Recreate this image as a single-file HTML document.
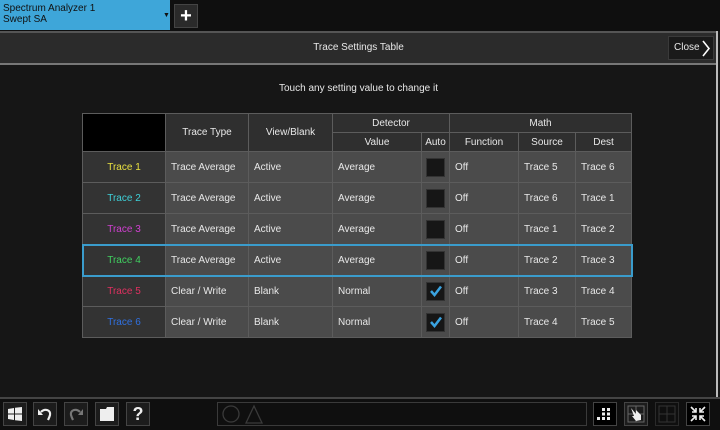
<!DOCTYPE html><html><head><style>
*{margin:0;padding:0;box-sizing:border-box}
body{width:720px;height:430px;background:#161616;font-family:"Liberation Sans",sans-serif;font-size:10px;color:#e8e8e8;position:relative;overflow:hidden}
.abs{position:absolute}
table{position:absolute;left:82px;top:113px;border-collapse:collapse;table-layout:fixed}
td{border:1px solid #5c5c5c;background:#4b4b4b;height:31px;padding-left:5px;white-space:nowrap}
tr.h td{background:#2f2f2f;text-align:center;padding:0;height:19px}
td.l{background:#333;text-align:center;padding:0}
.cb{width:19px;height:19px;background:#161616;border:1px solid #333;margin:0 auto;display:flex;align-items:center;justify-content:center}
td.a{padding:0}
.btn{position:absolute;top:402px;width:24px;height:24px;border:1px solid #444;background:#1c1c1c;display:flex;align-items:center;justify-content:center;color:#eee}
</style></head><body>
<div class="abs" style="left:0;top:0;width:720px;height:31px;background:#0f0f0f"></div>
<div class="abs" style="left:0;top:0;width:170px;height:30px;background:#3ea6d9;color:#111;font-size:10px;line-height:11px;padding:3px 3px">Spectrum Analyzer 1<br>Swept SA<span class="abs" style="left:163px;top:10px;font-size:7px">▼</span></div>
<div class="abs" style="left:174px;top:4px;width:24px;height:24px;background:#2a2a2a;border:1px solid #444;color:#fff;font-size:20px;font-weight:bold;text-align:center;line-height:22px">+</div>
<div class="abs" style="left:0;top:31px;width:717px;height:34px;background:#2b2b2b;border-top:2px solid #555;border-bottom:2px solid #777"></div>
<div class="abs" style="left:0;top:42px;width:717px;text-align:center;font-size:10px">Trace Settings Table</div>
<div class="abs" style="left:668px;top:36px;width:46px;height:24px;background:#1a1a1a;border:1px solid #3a3a3a;font-size:10px;line-height:22px;padding-left:5px">Close<svg class="abs" style="left:33px;top:3px" width="9" height="17"><path d="M1 1 L7 8.5 L1 16" stroke="#fff" stroke-width="1.6" fill="none"/></svg></div>
<div class="abs" style="left:716px;top:31px;width:2px;height:370px;background:#bbb"></div>
<div class="abs" style="left:0;top:83px;width:717px;text-align:center">Touch any setting value to change it</div>
<table>
<colgroup><col style="width:83px"><col style="width:83px"><col style="width:84px"><col style="width:89px"><col style="width:28px"><col style="width:69px"><col style="width:57px"><col style="width:56px"></colgroup>
<tr class="h"><td rowspan="2" style="background:#000"></td><td rowspan="2">Trace Type</td><td rowspan="2">View/Blank</td><td colspan="2">Detector</td><td colspan="3">Math</td></tr>
<tr class="h"><td>Value</td><td>Auto</td><td>Function</td><td>Source</td><td>Dest</td></tr>
<tr><td class="l" style="color:#e8e040">Trace 1</td><td>Trace Average</td><td>Active</td><td>Average</td><td class="a"><div class="cb"></div></td><td>Off</td><td>Trace 5</td><td>Trace 6</td></tr>
<tr><td class="l" style="color:#3ed0d8">Trace 2</td><td>Trace Average</td><td>Active</td><td>Average</td><td class="a"><div class="cb"></div></td><td>Off</td><td>Trace 6</td><td>Trace 1</td></tr>
<tr><td class="l" style="color:#d040d0">Trace 3</td><td>Trace Average</td><td>Active</td><td>Average</td><td class="a"><div class="cb"></div></td><td>Off</td><td>Trace 1</td><td>Trace 2</td></tr>
<tr style="outline:2px solid #3a9ccc;outline-offset:-1px"><td class="l" style="color:#40d060">Trace 4</td><td>Trace Average</td><td>Active</td><td>Average</td><td class="a"><div class="cb"></div></td><td>Off</td><td>Trace 2</td><td>Trace 3</td></tr>
<tr><td class="l" style="color:#e03060">Trace 5</td><td>Clear / Write</td><td>Blank</td><td>Normal</td><td class="a"><div class="cb"><svg width="14" height="12" viewBox="0 0 14 12"><path d="M2 6 L5.5 10 L12 1.5" stroke="#3aa3e0" stroke-width="2.5" fill="none"/></svg></div></td><td>Off</td><td>Trace 3</td><td>Trace 4</td></tr>
<tr><td class="l" style="color:#3070e0">Trace 6</td><td>Clear / Write</td><td>Blank</td><td>Normal</td><td class="a"><div class="cb"><svg width="14" height="12" viewBox="0 0 14 12"><path d="M2 6 L5.5 10 L12 1.5" stroke="#3aa3e0" stroke-width="2.5" fill="none"/></svg></div></td><td>Off</td><td>Trace 4</td><td>Trace 5</td></tr>
</table>
<div class="abs" style="left:0;top:397px;width:720px;height:33px;background:#0f0f0f;border-top:2px solid #444"></div>
<div class="btn" style="left:3px"><svg width="16" height="16"><path d="M1 3 L7 2 V7.5 H1Z M8 1.8 L15 1 V7.5 H8Z M1 8.5 H7 V14 L1 13Z M8 8.5 H15 V15 L8 14.2Z" fill="#eee"/></svg></div>
<div class="btn" style="left:33px"><svg width="16" height="16"><path d="M4 6 C8 2 14 4 13 9 C12.5 11 12 12 11 14" stroke="#eee" stroke-width="2.2" fill="none"/><path d="M1 3 L6 9 L1 9Z" fill="#eee"/></svg></div>
<div class="btn" style="left:64px;color:#777"><svg width="16" height="16"><path d="M12 6 C8 2 2 4 3 9 C3.5 11 4 12 5 14" stroke="#777" stroke-width="2.2" fill="none"/><path d="M15 3 L10 9 L15 9Z" fill="#777"/></svg></div>
<div class="btn" style="left:95px"><svg width="18" height="18"><path d="M2 4 H8 L9 2 H16 V16 H2Z" fill="#eee"/></svg></div>
<div class="btn" style="left:126px;font-size:18px;font-weight:bold">?</div>
<div class="abs" style="left:217px;top:402px;width:370px;height:24px;border:1px solid #3a3a3a"><svg width="50" height="22" style="position:absolute;left:2px;top:0"><circle cx="11" cy="11" r="8" stroke="#3a3a3a" fill="none" stroke-width="1.3"/><path d="M26 20 L34 3 L42 20Z" stroke="#3a3a3a" fill="none" stroke-width="1.3"/></svg></div>
<div class="btn" style="left:593px;background:#000"><svg width="16" height="14"><g fill="#eee"><rect x="5" y="1" width="3" height="3"/><rect x="10" y="1" width="3" height="3"/><rect x="5" y="5.5" width="3" height="3"/><rect x="10" y="5.5" width="3" height="3"/><rect x="0" y="10" width="3" height="3"/><rect x="5" y="10" width="3" height="3"/><rect x="10" y="10" width="3" height="3"/></g></svg></div>
<div class="btn" style="left:624px"><svg width="18" height="18"><rect x="1" y="1" width="16" height="16" fill="none" stroke="#666"/><path d="M9 1V17M1 9H17" stroke="#666"/><path d="M4 3 L9 9 L9 5 L14 10 L14 15 L9 16 L5 11 L7 11Z" fill="#eee"/></svg></div>
<div class="btn" style="left:655px;border-color:#2a2a2a;background:#0f0f0f"><svg width="18" height="18"><rect x="1" y="1" width="16" height="16" fill="none" stroke="#333"/><path d="M9 1V17M1 9H17" stroke="#333"/></svg></div>
<div class="btn" style="left:686px;background:#000"><svg width="18" height="18" stroke="#eee" stroke-width="1.6" fill="none"><path d="M2 2L7 7M16 2L11 7M2 16L7 11M16 16L11 11"/><path d="M7 3V7H3M11 3V7H15M7 15V11H3M11 15V11H15"/></svg></div>
</body></html>
